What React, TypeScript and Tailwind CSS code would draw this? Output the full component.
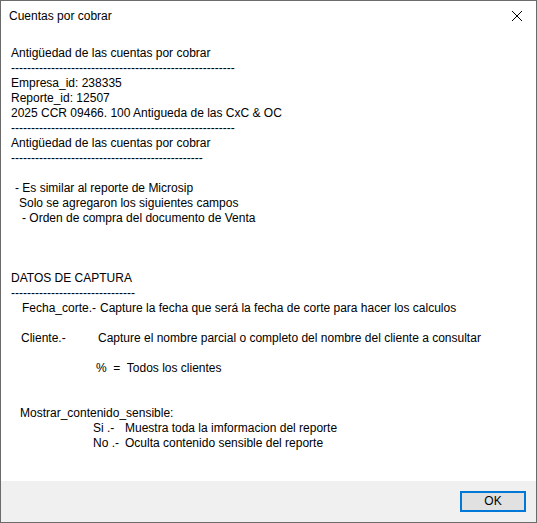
import React from 'react';

type Line = {
  text?: string;
  indent?: number;
  label?: string;
  labelWidth?: number;
  dashes?: number;
};

const lines: Line[] = [
  { text: 'Antigüedad de las cuentas por cobrar' },
  { dashes: 56 },
  { text: 'Empresa_id: 238335' },
  { text: 'Reporte_id: 12507' },
  { text: '2025 CCR 09466. 100 Antigueda de las CxC & OC' },
  { dashes: 56 },
  { text: 'Antigüedad de las cuentas por cobrar' },
  { dashes: 48 },
  {},
  { text: '- Es similar al reporte de Microsip', indent: 4 },
  { text: 'Solo se agregaron los siguientes campos', indent: 8 },
  { text: '- Orden de compra del documento de Venta', indent: 11 },
  {},
  {},
  {},
  { text: 'DATOS DE CAPTURA' },
  { dashes: 31 },
  { label: 'Fecha_corte.-', labelWidth: 78, text: 'Capture la fecha que será la fecha de corte para hacer los calculos', indent: 11 },
  {},
  { label: 'Cliente.-', labelWidth: 77, text: 'Capture el nombre parcial o completo del nombre del cliente a consultar', indent: 10 },
  {},
  { text: '%  =  Todos los clientes', indent: 85 },
  {},
  {},
  { text: 'Mostrar_contenido_sensible:', indent: 9 },
  { label: 'Si .-', labelWidth: 32, text: 'Muestra toda la imformacion del reporte', indent: 82 },
  { label: 'No .-', labelWidth: 32, text: 'Oculta contenido sensible del reporte', indent: 82 },
];

function TextLine({ line }: { line: Line }) {
  if (line.dashes) {
    return <div className="h-[15px] whitespace-nowrap">{'-'.repeat(line.dashes)}</div>;
  }
  return (
    <div className="h-[15px] flex whitespace-pre" style={{ paddingLeft: line.indent || 0 }}>
      {line.label && (
        <span className="shrink-0" style={{ width: line.labelWidth }}>
          {line.label}
        </span>
      )}
      <span>{line.text || ''}</span>
    </div>
  );
}

export default function App() {
  return (
    <div
      className="w-[537px] h-[523px] flex flex-col bg-white border border-[#6b6b6b] text-black text-[12px] leading-[15px]"
      style={{ fontFamily: '"Liberation Sans", Arial, sans-serif' }}
    >
      {/* title bar */}
      <div className="h-[30px] flex items-center justify-between pl-[8px] pr-[10px]">
        <span className="pt-[1px]">Cuentas por cobrar</span>
        <svg width="12" height="12" viewBox="0 0 12 12" className="mr-[3px]">
          <path d="M1 1 L11 11 M11 1 L1 11" stroke="#000" strokeWidth="1" fill="none" />
        </svg>
      </div>

      {/* message */}
      <div className="h-[450px] pt-[15px] pl-[10px]">
        {lines.map((line, i) => (
          <TextLine key={i} line={line} />
        ))}
      </div>

      {/* footer */}
      <div className="flex-1 bg-[#f0f0f0] flex justify-end items-start pt-[10px] pr-[10px]">
        <button className="w-[66px] h-[21px] bg-[#e1e1e1] border-2 border-[#0078d7] flex items-center justify-center">
          OK
        </button>
      </div>
    </div>
  );
}
